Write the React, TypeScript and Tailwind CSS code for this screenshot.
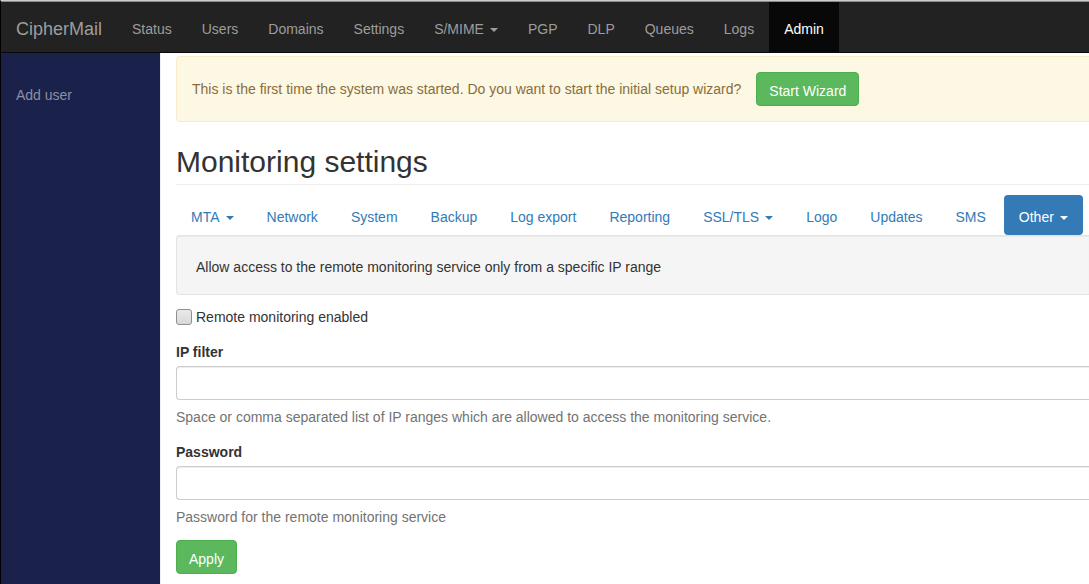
import React from 'react';

const mainMenu = [
  { label: "Status" },
  { label: "Users" },
  { label: "Domains" },
  { label: "Settings" },
  { label: "S/MIME", dropdown: true },
  { label: "PGP" },
  { label: "DLP" },
  { label: "Queues" },
  { label: "Logs" },
  { label: "Admin", active: true }
];

const tabs = [
  { label: "MTA", dropdown: true },
  { label: "Network" },
  { label: "System" },
  { label: "Backup" },
  { label: "Log export" },
  { label: "Reporting" },
  { label: "SSL/TLS", dropdown: true },
  { label: "Logo" },
  { label: "Updates" },
  { label: "SMS" },
  { label: "Other", dropdown: true, active: true }
];

const fields = [
  {
    id: "ip-filter",
    label: "IP filter",
    type: "text",
    help: "Space or comma separated list of IP ranges which are allowed to access the monitoring service."
  },
  {
    id: "password",
    label: "Password",
    type: "password",
    help: "Password for the remote monitoring service"
  }
];

const buttonClass =
  "rounded border border-[#4cae4c] bg-[#5cb85c] px-3 pt-2 pb-1 text-white hover:bg-[#449d44]";

function Caret() {
  return (
    <span className="ml-1.5 inline-block border-x-4 border-t-4 border-x-transparent border-t-current align-middle" />
  );
}

function Navbar() {
  return (
    <nav className="flex border-t border-b border-t-[#8a8a8a] border-b-[#080808] bg-[#222] text-[#9d9d9d]">
      <a href="#" className="px-[15px] pt-[17px] pb-[13px] text-lg leading-5">CipherMail</a>
      <ul className="flex">
        {mainMenu.map((item) => (
          <li key={item.label}>
            <a
              href="#"
              className={`block px-[15px] pt-[17px] pb-[13px] whitespace-nowrap ${item.active ? "bg-[#080808] text-white" : "hover:text-white"}`}
            >
              {item.label}
              {item.dropdown && <Caret />}
            </a>
          </li>
        ))}
      </ul>
    </nav>
  );
}

function Sidebar() {
  return (
    <aside className="w-40 shrink-0 border-r border-[#eee] bg-[#1a224c] bg-clip-padding pt-5">
      <a href="#" className="block px-[15px] pt-3 pb-2 text-[#8b8fa3] hover:text-white">Add user</a>
    </aside>
  );
}

function SettingsForm() {
  return (
    <form className="mt-3" onSubmit={(e) => e.preventDefault()}>
      <label className="mb-[15px] flex w-fit items-center gap-1">
        <input
          type="checkbox"
          className="size-4 appearance-none rounded-[3px] border border-[#8f8f8f] bg-linear-to-b from-[#e9e9e9] to-[#d9d9d9] checked:bg-[#337ab7]"
        />
        Remote monitoring enabled
      </label>
      <div className="mb-[13px] flex flex-col gap-[15px]">
        {fields.map((field) => (
          <div key={field.id}>
            <label htmlFor={field.id} className="mb-1 block font-bold">{field.label}</label>
            <input
              id={field.id}
              type={field.type}
              className="block h-[34px] w-full rounded-l border border-r-0 border-[#ccc] bg-white px-3 shadow-[inset_0_1px_1px_rgba(0,0,0,0.075)] outline-none"
            />
            <p className="mt-[7px] text-[#737373]">{field.help}</p>
          </div>
        ))}
      </div>
      <button type="submit" className={buttonClass}>Apply</button>
    </form>
  );
}

export default function App() {
  return (
    <div className="flex min-h-screen flex-col border-t border-l border-t-[#ccc] border-l-black bg-white font-['Liberation_Sans',Arial,sans-serif] text-sm leading-5 text-[#333]">
      <Navbar />
      <div className="flex grow">
        <Sidebar />
        <main className="min-w-0 grow overflow-hidden pt-[3px] pb-2.5 pl-[15px]">
          <div className="mb-5 flex items-center gap-[15px] rounded-l border border-r-0 border-[#faebcc] bg-[#fcf8e3] p-[15px] text-[#8a6d3b]">
            <p>This is the first time the system was started. Do you want to start the initial setup wizard?</p>
            <button type="button" className={`${buttonClass} shrink-0`}>Start Wizard</button>
          </div>
          <h2 className="mb-2.5 border-b border-[#eee] pt-[3px] pb-1.5 text-3xl leading-[33px]">Monitoring settings</h2>
          <ul className="flex gap-[3px]">
            {tabs.map((tab) => (
              <li key={tab.label}>
                <a
                  href="#"
                  className={`block rounded px-[15px] pt-3 pb-2 whitespace-nowrap ${tab.active ? "bg-[#337ab7] text-white" : "text-[#337ab7] hover:bg-[#eee]"}`}
                >
                  {tab.label}
                  {tab.dropdown && <Caret />}
                </a>
              </li>
            ))}
          </ul>
          <div className="rounded-l border border-r-0 border-[#e3e3e3] bg-[#f5f5f5] px-[19px] pt-[21px] pb-[17px] shadow-[inset_0_1px_1px_rgba(0,0,0,0.05)]">
            Allow access to the remote monitoring service only from a specific IP range
          </div>
          <SettingsForm />
        </main>
      </div>
    </div>
  );
}
